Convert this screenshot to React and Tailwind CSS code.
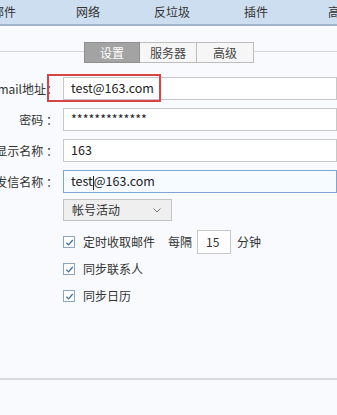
import React from 'react';

const font = { fontFamily: '"Noto Sans CJK SC", "Noto Sans", sans-serif' };

const navItems = ['邮件', '网络', '反垃圾', '插件', '高级'];

const Field = ({ label, value, focused, highlight }) => (
  <div className="flex items-center h-[23px]">
    <div className="w-[58px] flex justify-end overflow-hidden whitespace-nowrap text-[12px] text-[#333]">
      {label}
    </div>
    <div className="relative ml-[5px] flex-1">
      <div
        className={
          focused
            ? 'h-[23px] border border-[#7fa6cf] bg-[#f6fbff] pl-[7px] flex items-center text-[12.5px] text-[#222]'
            : 'h-[23px] border border-[#c8c8c8] bg-white pl-[7px] flex items-center text-[12.5px] text-[#222]'
        }
      >
        {value}
      </div>
      {highlight && (
        <div className="absolute left-[-16px] top-[-3px] w-[114px] h-[28px] border-2 border-[#d64545]" />
      )}
    </div>
  </div>
);

const Check = ({ children }) => (
  <div className="flex items-center h-[24px]">
    <div className="w-[12px] h-[12px] border border-[#8aa6c0] bg-white flex items-center justify-center">
      <svg width="9" height="9" viewBox="0 0 10 10">
        <path d="M1.5 5.2 L4 7.6 L8.6 2.2" fill="none" stroke="#3a6f9e" strokeWidth="1.4" />
      </svg>
    </div>
    <div className="ml-[8px] text-[12px] text-[#333] flex items-center">{children}</div>
  </div>
);

export default function App() {
  return (
    <div className="w-[337px] h-[415px] overflow-hidden bg-[#f8fafd]" style={font}>
      <div className="h-[26px] bg-[#cddef0] border-b-2 border-[#a3b6c8] flex items-center overflow-hidden">
        <div className="flex ml-[-38px]">
          {navItems.map((n) => (
            <div key={n} className="w-[84px] shrink-0 text-center text-[12px] text-[#333]">
              {n}
            </div>
          ))}
        </div>
      </div>

      <div className="relative mt-[16px] h-[20px]">
        <div className="absolute left-0 right-0 top-[9px] h-px bg-[#d6d6d6]" />
        <div className="absolute left-[84px] top-0 flex text-[12px]">
          <div className="w-[56px] h-[21px] bg-[#a3a3a3] border border-[#8f8f8f] text-white flex items-center justify-center">设置</div>
          <div className="w-[57px] h-[21px] bg-[#f6f6f6] border-y border-r border-[#bdbdbd] text-[#444] flex items-center justify-center">服务器</div>
          <div className="w-[57px] h-[21px] bg-[#f6f6f6] border-y border-r border-[#bdbdbd] text-[#444] flex items-center justify-center">高级</div>
        </div>
      </div>

      <div className="mt-[15px] flex flex-col gap-[8px]">
        <Field label="Email地址：" value="test@163.com" highlight />
        <Field label="密码 ：" value="*************" />
        <Field label="显示名称 ：" value="163" />
        <Field label="发信名称 ：" value={<span>test<span className="inline-block w-px h-[14px] bg-[#222] align-middle" />@163.com</span>} focused />
      </div>

      <div className="ml-[63px] mt-[6px]">
        <div className="w-[109px] h-[22px] bg-[#efefef] border border-[#c4c4c4] flex items-center justify-between pl-[8px] pr-[10px] text-[12px] text-[#333]">
          <span>帐号活动</span>
          <svg width="8" height="5" viewBox="0 0 8 5">
            <path d="M0.5 0.5 L4 4 L7.5 0.5" fill="none" stroke="#777" strokeWidth="1" />
          </svg>
        </div>

        <div className="mt-[9px] flex flex-col gap-[3px]">
          <Check>
            <span>定时收取邮件</span>
            <span className="ml-[13px]">每隔</span>
            <span className="ml-[5px] w-[34px] h-[24px] border border-[#c8c8c8] bg-white flex items-center pl-[8px]">15</span>
            <span className="ml-[6px]">分钟</span>
          </Check>
          <Check>同步联系人</Check>
          <Check>同步日历</Check>
        </div>
      </div>

      <div className="mt-[70px] h-[2px] bg-[#d9d9d9]" />
    </div>
  );
}
